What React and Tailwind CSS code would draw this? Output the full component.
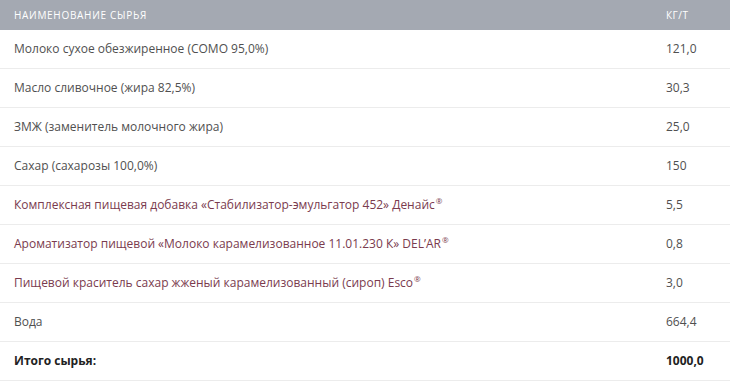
const rows = [
  { name: 'Молоко сухое обезжиренное (СОМО 95,0%)', value: '121,0' },
  { name: 'Масло сливочное (жира 82,5%)', value: '30,3' },
  { name: 'ЗМЖ (заменитель молочного жира)', value: '25,0' },
  { name: 'Сахар (сахарозы 100,0%)', value: '150' },
  { name: 'Комплексная пищевая добавка «Стабилизатор-эмульгатор 452» Денайс', value: '5,5', brand: true },
  { name: 'Ароматизатор пищевой «Молоко карамелизованное 11.01.230 К» DEL’AR', value: '0,8', brand: true },
  { name: 'Пищевой краситель сахар жженый карамелизованный (сироп) Esco', value: '3,0', brand: true },
  { name: 'Вода', value: '664,4' },
];

const App = () => {
  return (
    <div className="w-[730px] bg-white font-['Open_Sans',sans-serif] text-[12px] text-[#505050]">
      {/* header */}
      <div className="flex h-[30px] items-center bg-[#a4a9b2] text-[10px] uppercase text-white">
        <div className="flex-1 pl-[14px] tracking-[0.7px]">Наименование сырья</div>
        <div className="w-[64px] tracking-[0.5px]">кг/т</div>
      </div>

      {rows.map((r) => (
        <div key={r.name} className="flex h-[39px] items-center border-b border-[#ececec]">
          <div className={`flex-1 pl-[14px] ${r.brand ? 'text-[#7a3b4e]' : ''}`}>
            {r.name}
            <sup className={r.brand ? 'relative -top-[5px] ml-[1px] text-[8px]' : 'hidden'}>®</sup>
          </div>
          <div className="w-[64px]">{r.value}</div>
        </div>
      ))}

      <div className="flex h-[39px] items-center border-b border-[#ececec] font-bold text-[#222]">
        <div className="flex-1 pl-[14px]">Итого сырья:</div>
        <div className="w-[64px]">1000,0</div>
      </div>
    </div>
  );
};

export default App;
